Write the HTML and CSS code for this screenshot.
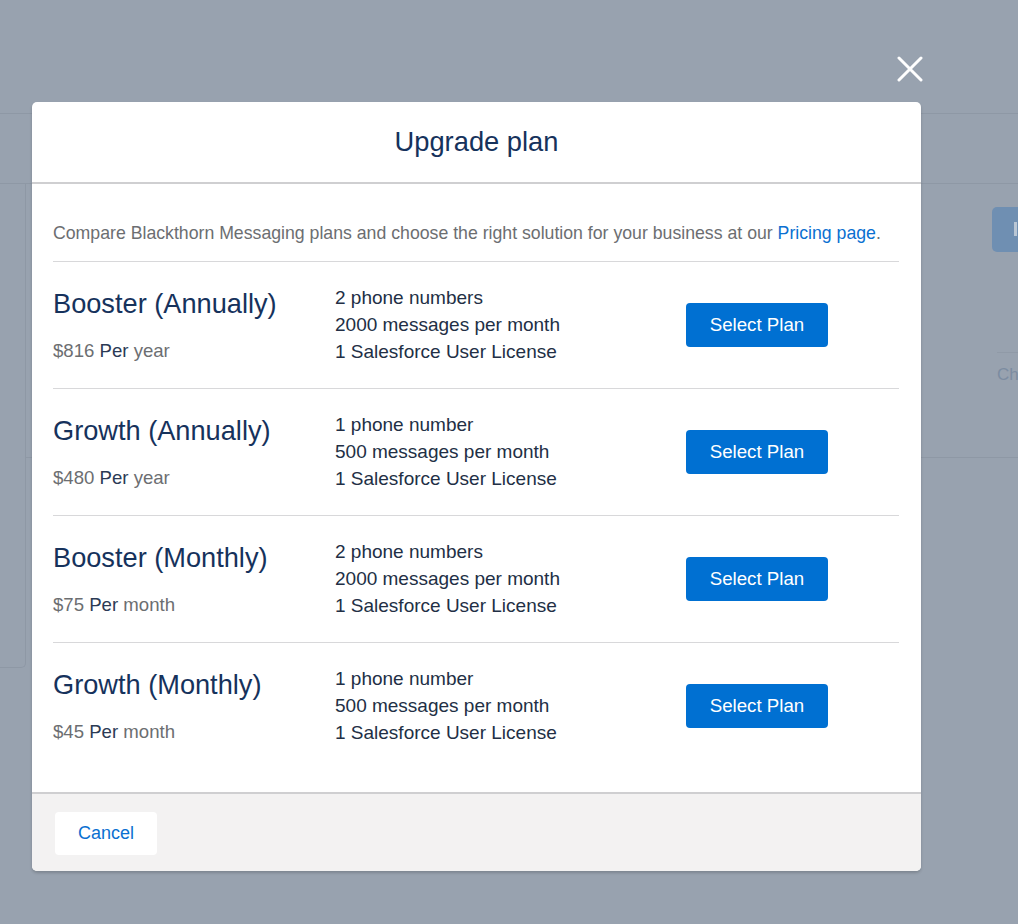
FILE: index.html
```html
<!DOCTYPE html>
<html lang="en">
<head>
<meta charset="utf-8">
<title>Upgrade plan</title>
<link rel="stylesheet" href="styles.css">
</head>
<body>
<div class="app">
  <div class="app-header"></div>
  <div class="app-subbar"></div>
  <div class="app-content">
    <div class="left-card"></div>
    <div class="main">
      <div class="main-section">
        <div class="bg-button"></div>
        <div class="bg-rule"></div>
        <div class="bg-text">Ch</div>
      </div>
    </div>
  </div>
</div>

<button class="close-btn" aria-label="Close">
  <svg width="26" height="26" viewBox="0 0 26 26"><path d="M2 2 L24 24 M24 2 L2 24" stroke="#ffffff" stroke-width="3" stroke-linecap="round" fill="none"/></svg>
</button>

<div class="modal">
  <div class="modal-header">Upgrade plan</div>
  <div class="modal-body">
    <p class="intro">Compare Blackthorn Messaging plans and choose the right solution for your business at our <a class="link" href="#">Pricing page</a>.</p>

    <div class="plan">
      <div class="plan-name">
        <div class="plan-title">Booster (Annually)</div>
        <div class="plan-price">$816 <span class="per">Per</span> year</div>
      </div>
      <div class="plan-features">
        <div>2 phone numbers</div>
        <div>2000 messages per month</div>
        <div>1 Salesforce User License</div>
      </div>
      <div class="plan-action"><button class="btn-brand">Select Plan</button></div>
    </div>

    <div class="plan">
      <div class="plan-name">
        <div class="plan-title">Growth (Annually)</div>
        <div class="plan-price">$480 <span class="per">Per</span> year</div>
      </div>
      <div class="plan-features">
        <div>1 phone number</div>
        <div>500 messages per month</div>
        <div>1 Salesforce User License</div>
      </div>
      <div class="plan-action"><button class="btn-brand">Select Plan</button></div>
    </div>

    <div class="plan">
      <div class="plan-name">
        <div class="plan-title">Booster (Monthly)</div>
        <div class="plan-price">$75 <span class="per">Per</span> month</div>
      </div>
      <div class="plan-features">
        <div>2 phone numbers</div>
        <div>2000 messages per month</div>
        <div>1 Salesforce User License</div>
      </div>
      <div class="plan-action"><button class="btn-brand">Select Plan</button></div>
    </div>

    <div class="plan">
      <div class="plan-name">
        <div class="plan-title">Growth (Monthly)</div>
        <div class="plan-price">$45 <span class="per">Per</span> month</div>
      </div>
      <div class="plan-features">
        <div>1 phone number</div>
        <div>500 messages per month</div>
        <div>1 Salesforce User License</div>
      </div>
      <div class="plan-action"><button class="btn-brand">Select Plan</button></div>
    </div>
  </div>
  <div class="modal-footer">
    <button class="btn-neutral">Cancel</button>
  </div>
</div>
</body>
</html>
```

FILE: styles.css
```css
html, body {
  margin: 0;
  padding: 0;
}
body {
  background: #98a2af;
  font-family: "Liberation Sans", Arial, sans-serif;
  width: 1018px;
  height: 924px;
  overflow: hidden;
  position: relative;
}

/* dimmed application behind the modal */
.app {
  width: 100%;
}
.app-header {
  height: 113px;
  border-bottom: 1px solid #8e98a5;
}
.app-subbar {
  height: 69px;
  border-bottom: 1px solid #8e98a5;
}
.app-content {
  display: flex;
}
.left-card {
  flex: 0 0 auto;
  width: 25px;
  height: 483px;
  border-right: 1px solid #8e98a5;
  border-bottom: 1px solid #8e98a5;
  border-bottom-right-radius: 5px;
}
.main {
  flex: 1;
  min-width: 0;
  overflow: hidden;
}
.main-section {
  border-bottom: 1px solid #8e98a5;
  padding: 23px 0 0 966px;
  box-sizing: border-box;
  height: 274px;
}
.bg-button {
  width: 60px;
  height: 45px;
  background: #6f8fb2;
  border-radius: 5px;
  padding: 15px 0 0 22px;
  box-sizing: border-box;
}
.bg-button::before {
  content: "";
  display: block;
  width: 3px;
  height: 14px;
  background: #b9c6d4;
}
.bg-rule {
  margin: 100px 0 0 5px;
  height: 1px;
  background: #909aa7;
}
.bg-text {
  margin: 12px 0 0 5px;
  color: #7c8ca1;
  font-size: 17px;
  line-height: 20px;
}

/* close */
.close-btn {
  position: absolute;
  left: 897px;
  top: 56px;
  width: 26px;
  height: 26px;
  padding: 0;
  border: 0;
  background: transparent;
}
.close-btn svg {
  display: block;
}

/* modal */
.modal {
  position: absolute;
  left: 32px;
  top: 102px;
  width: 889px;
  background: #ffffff;
  border-radius: 5px;
  overflow: hidden;
  box-shadow: 0 2px 3px rgba(0, 0, 0, 0.18);
}
.modal-header {
  display: flex;
  align-items: center;
  justify-content: center;
  border-bottom: 2px solid #cfcfd1;
  color: #16325c;
  font-size: 27.3px;
  box-sizing: border-box;
  height: 82px;
}
.modal-body {
  padding: 0 22px 23px 21px;
}
.intro {
  margin: 0;
  padding: 37px 0 16px;
  border-bottom: 1px solid #d8d8da;
  color: #6c6e71;
  font-size: 17.7px;
  line-height: 24px;
  white-space: nowrap;
}
.link {
  color: #0a70d1;
  text-decoration: none;
}
.plan {
  display: grid;
  grid-template-columns: 282px 351px 1fr;
  align-items: center;
  height: 127px;
  border-bottom: 1px solid #d8d8da;
  box-sizing: border-box;
}
.plan:last-child {
  border-bottom: 0;
  height: 126px;
}
.plan-name {
  display: flex;
  flex-direction: column;
  gap: 20px;
  margin-top: 1px;
}
.plan-title {
  color: #16325c;
  font-size: 27.2px;
  line-height: 30px;
}
.plan-price {
  color: #6c6e71;
  font-size: 18.6px;
  line-height: 24px;
}
.per {
  color: #2b3a55;
}
.plan-features {
  color: #222f45;
  font-size: 19px;
  line-height: 27px;
  margin-top: -2px;
}
.plan-action {
  display: flex;
}
.btn-brand {
  width: 142px;
  height: 44px;
  border: 0;
  border-radius: 4px;
  background: #0070d2;
  color: #ffffff;
  font-family: "Liberation Sans", Arial, sans-serif;
  font-size: 18.7px;
  padding: 0;
}

.modal-footer {
  background: #f3f2f2;
  border-top: 2px solid #cfcfd1;
  height: 79px;
  box-sizing: border-box;
  padding: 18px 0 0 23px;
}
.btn-neutral {
  width: 102px;
  height: 43px;
  border: 0;
  border-radius: 4px;
  background: #ffffff;
  color: #0a70d1;
  font-family: "Liberation Sans", Arial, sans-serif;
  font-size: 18px;
  padding: 0;
}
```
